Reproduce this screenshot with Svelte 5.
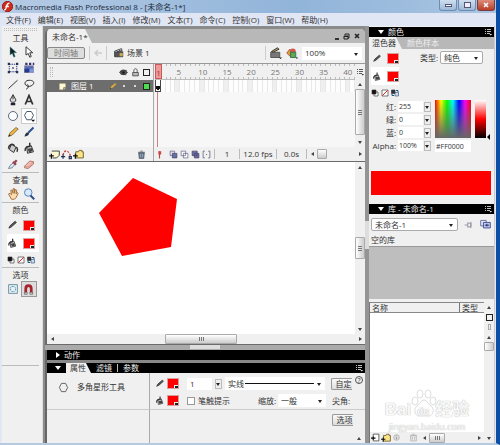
<script>
  const menus = ['文件(F)', '编辑(E)', '视图(V)', '插入(I)', '修改(M)', '文本(T)', '命令(C)', '控制(O)', '窗口(W)', '帮助(H)'];
  const tools = ['arrow', 'subarrow', 'transform', 'gradient', 'line', 'lasso', 'pen', 'text', 'oval', 'poly', 'pencil', 'brush', 'ink', 'bucket', 'dropper', 'eraser'];
  const frames = Array.from({ length: 41 }, (_, i) => i + 1);
  const channels = [['红:', '255'], ['绿:', '0'], ['蓝:', '0'], ['Alpha:', '100%']];
</script>

{#snippet icon(name, size = 14)}
  <svg class="ic" width={size} height={size} viewBox="0 0 16 16" fill="none" stroke="#333" stroke-width="1.3" aria-hidden="true">
    {#if name === 'arrow'}
      <path d="M4 1v11l3-2 2 5 2-1-2-5h4z" fill="#122" stroke="#5aa" stroke-width=".6" />
    {:else if name === 'subarrow'}
      <path d="M4 1v11l3-2 2 5 2-1-2-5h4z" fill="#fff" />
    {:else if name === 'transform'}
      <path d="M3 3h10v10H3z" stroke-dasharray="2 1" stroke="#347" /><path d="M1 1h3v3H1zM12 1h3v3h-3zM1 12h3v3H1zM12 12h3v3h-3zM7 7h2v2H7z" fill="#235" stroke="none" />
    {:else if name === 'gradient'}
      <path d="M2 5h12v9H2z" fill="#5869ba" stroke="#99a" /><path d="M2 9h6v5H2z" fill="#223b8c" stroke="none" /><path d="M3 1h3v3H3zM8 1h3v3H8zM13 1h2v3h-2z" fill="#336" stroke="none" /><path d="M9 9h5v5H9z" fill="#7f92dc" stroke="none" />
    {:else if name === 'line'}
      <path d="M2 14 14 3" />
    {:else if name === 'lasso'}
      <path d="M5 10C1 9 2 3 8 3s8 3 5 6-8 3-8 1 3-1 2 2-2 2-3 3" />
    {:else if name === 'pen'}
      <path d="M8 1 4 8l2 3h4l2-3zM8 1v6" fill="#ddd" /><path d="M5 12h6v3H5z" fill="#223" stroke="none" />
    {:else if name === 'text'}
      <path d="m3 14 5-12 5 12M5 10h6" stroke-width="2.3" />
    {:else if name === 'oval'}
      <circle cx="8" cy="8" r="6" fill="#fafcff" stroke="#567" />
    {:else if name === 'poly'}
      <path d="M5 2h6l3 5-3 6H5L2 7z" fill="#fff" stroke="#456" /><path d="M11 13h5l-2.500 3z" fill="#111" stroke="none" />
    {:else if name === 'pencil'}
      <path d="m2 14 2-5 8-7 3 2-8 8z" fill="#eeb53a" stroke="#875" /><path d="m2 14 1-3 2 2z" fill="#321" stroke="none" />
    {:else if name === 'brush'}
      <path d="m7 9 7-7" stroke="#2a4f8f" stroke-width="2.500" /><path d="M2 14c1-4 3-6 5-5s1 4-5 5z" fill="#234" stroke="none" />
    {:else if name === 'ink'}
      <path d="m6 3 6 4-3 7-6-4z" fill="#ccc" /><path d="M2 9c0-5 5-8 8-4M12 7c3 1 2 5 1 6" stroke-width="2" />
    {:else if name === 'bucket'}
      <path d="m5 6 6-1 3 8-8 2z" fill="#ddd" /><path d="M3 12c-1-5 3-6 6-6V1" stroke-width="2" /><path d="m6 9 6-1 1 4-5 2z" fill="#444" stroke="none" />
    {:else if name === 'dropper'}
      <path d="m2 14 2-4 5-4 2 2-4 5z" fill="#dbe7f5" stroke="#789" /><path d="m8 5 4 4M10 6l3-3" stroke="#954250" stroke-width="3" />
    {:else if name === 'eraser'}
      <path d="m2 11 7-7 5 1v3l-7 6-5-1z" fill="#f4b9b0" stroke="#b0736c" /><path d="m2 11 5 1 7-7" stroke="#c98" />
    {:else if name === 'hand'}
      <path d="m2 8 2-1 2 2-1-6 2 0 1 4V1h2v6l1-5 2 1-1 5 2-2 1 1-3 6-2 2H6z" fill="#fbdcae" stroke="#a5703b" />
    {:else if name === 'zoom'}
      <circle cx="7" cy="6" r="5" fill="#d7e9fb" stroke="#5782b4" /><path d="m10 10 5 5" stroke="#2c4e85" stroke-width="2.500" />
    {:else if name === 'stroke'}
      <path d="m3 13 2-4 8-7 2 2-8 7z" fill="#555" />
    {:else if name === 'blackwhite'}
      <path d="M6 6h8v8H6z" fill="#fff" /><path d="M2 2h8v8H2z" fill="#111" />
    {:else if name === 'none'}
      <path d="M2 2h12v12H2z" fill="#fff" /><path d="M3 13 13 3" stroke="#d22" stroke-width="2" />
    {:else if name === 'swap'}
      <path d="M1 2h7v7H1z" fill="#333" /><path d="M8 7h7v7H8z" fill="#cde" stroke="#357" /><path d="M10 3h4v3M6 13H2v-3" stroke="#258" stroke-width="2" />
    {:else if name === 'smooth'}
      <path d="M1 1h14v14H1z" fill="#e4f1f7" stroke="#567f95" /><path d="M6 4h4l2 2v4l-2 2H6l-2-2V6z" stroke="#57859b" stroke-dasharray="3 1" />
    {:else if name === 'magnet'}
      <path d="M4 14V7c0-6 8-6 8 0v7" stroke="#a7232b" stroke-width="4" /><path d="M2 12h4v3H2zM10 12h4v3h-4z" fill="#ccc" stroke="#555" stroke-width=".8" />
    {:else if name === 'scene'}
      <path d="M1 6h13v8H1z" fill="#555" stroke="#333" /><path d="m1 5 11-4 1 3-11 3z" fill="#ddd" /><path d="m4 4 2 2M8 3l2 2" /><path d="M9 8h5v5H9z" fill="#c9a94c" stroke="none" />
    {:else if name === 'clip'}
      <path d="M1 7h12v7H1z" fill="#777" stroke="#555" /><path d="m2 6 8-5 2 2-8 4z" fill="#b9a65e" /><path d="M12 14h4l-2 2z" fill="#111" stroke="none" />
    {:else if name === 'symbols'}
      <path d="m1 8 4-5 5 5-4 5z" fill="#e0a22d" stroke="#a55" /><circle cx="9" cy="6" r="4" fill="#cf594b" stroke="none" /><path d="M6 7h7v7H6z" fill="#67a54d" stroke="#375" /><path d="M13 14h3l-1.500 2z" fill="#111" stroke="none" />
    {:else if name === 'eye'}
      <path d="M1 8c3-6 10-6 14 0-4 5-10 5-14 0z" fill="#555" /><path d="m2 6 12-2M3 11l10 1" /><circle cx="8" cy="8" r="2" fill="#111" />
    {:else if name === 'lock'}
      <path d="M5 8V5c0-5 6-5 6 0v3" /><path d="M3 8h10v6H3z" fill="#bbb" />
    {:else if name === 'layer'}
      <path d="M2 2h12v8l-4 4H2z" fill="#fffad2" stroke="#776" /><path d="M14 10h-4v4" fill="#bba" stroke="#665" />
    {:else if name === 'addlayer'}
      <path d="M4 3h11v6l-4 4H5" fill="#fff8cf" /><path d="M0 10h7M3.500 7v7" stroke="#111" stroke-width="1.800" />
    {:else if name === 'guide'}
      <path d="M3 9c1-8 8-9 11 2" stroke="#c44" stroke-width="2" stroke-dasharray="3 2" /><path d="M0 11h6M3 8v6M12 11h3v3h-3z" stroke="#235" stroke-width="1.800" />
    {:else if name === 'folder'}
      <path d="M4 4h4l1-2h4v2h2v9H4z" fill="#fbe386" stroke="#665a2a" /><path d="M0 10h7M3.500 7v7" stroke="#111" stroke-width="1.800" />
    {:else if name === 'trash'}
      <path d="M3 5h10l-1 10H4zM2 4h12M6 2h4" fill="#68788a" stroke="#456" /><path d="M6 7v6M10 7v6" stroke="#abc" />
    {:else if name === 'onion'}
      <path d="M2 2h8v8H2z" fill="#dde" stroke="#668" /><path d="M6 6h8v8H6z" fill="#6870a5" stroke="#446" />
    {:else if name === 'outline'}
      <path d="M2 2h8v8H2zM6 6h8v8H6z" fill="#fff" stroke="#668" />
    {:else if name === 'multi'}
      <path d="M2 2h9v8H2zM6 6h8v8H6z" fill="#6d6da8" stroke="#446" />
    {:else if name === 'brackets'}
      <path d="M5 2H2v12h3M11 2h3v12h-3M7 8h2" stroke="#557" />
    {:else if name === 'playhead'}
      <path d="M8 2v13" stroke="#b44" stroke-width="2" /><path d="M6 2h5v6H6z" fill="#c44" stroke="none" />
    {:else if name === 'options'}
      <path d="M2 3h2M6 3h8M2 7h2M6 7h8M2 11h2M6 11h6" stroke="currentColor" stroke-width="1.600" /><path d="M11 12h5l-2.500 3z" fill="currentColor" stroke="none" />
    {:else if name === 'pin'}
      <path d="M1 8h5M6 4v8M6 5h5v6H6M11 3v10" stroke="#889" />
    {:else if name === 'newlib'}
      <path d="M1 2h8v8H1z" fill="#dde8fa" stroke="#669" /><path d="M5 5h10v8H5z" fill="#b8cdf0" stroke="#448" /><path d="M7 9h6M10 7v4" stroke="#225" />
    {:else if name === 'newsym'}
      <path d="M4 2h10v12H4z" fill="#fff" /><path d="M0 9h8M4 6v6" stroke="#111" stroke-width="2" />
    {:else if name === 'info'}
      <circle cx="8" cy="8" r="5" fill="#ddd" stroke="#aaa" /><path d="M8 7v4M8 4v1" stroke="#888" />
    {:else if name === 'bin'}
      <path d="M3 5h10v9H3zM2 4h12M6 2h4M6 7v5M10 7v5" stroke="#aaa" />
    {:else if name === 'flash'}
      <circle cx="8" cy="8" r="7.500" fill="#cf2c1c" stroke="#8d1712" /><path d="M11 3c-4 0-4 3-5 7-.5 2-1 3-3 3M5 8h5" stroke="#fff" stroke-width="2" />
    {:else if name === 'hex'}
      <path d="M5 2h6l3 6-3 6H5L2 8z" stroke="#555" />
    {/if}
  </svg>
{/snippet}

{#snippet swatch(label)}
  <button class="swatch" aria-label={label}><i></i></button>
{/snippet}

{#snippet vbar(label, cls)}
  <div class="vbar {cls}">
    <button class="nub up" aria-label="{label} 上"></button>
    <div class="track"><span class="thumb"></span></div>
    <button class="nub down" aria-label="{label} 下"></button>
  </div>
{/snippet}

{#snippet hbar(label, cls)}
  <div class="hbar {cls}">
    <button class="nub left" aria-label="{label} 左"></button>
    <div class="track"><span class="thumb"></span></div>
    <button class="nub next" aria-label="{label} 右"></button>
  </div>
{/snippet}

{#snippet colors(size)}
  <div class="colorrow">{@render icon('stroke', size)}{@render swatch('笔触颜色')}</div>
  <div class="colorrow active">{@render icon('bucket', size)}{@render swatch('填充颜色')}</div>
  <div class="minis">{@render icon('blackwhite', 8)}{@render icon('none', 8)}{@render icon('swap', 8)}</div>
{/snippet}

<div class="window">
  <header class="title">
    {@render icon('flash', 11)}
    <h1>Macromedia Flash Professional 8 - [未命名-1*]</h1>
    <div class="winbtns">
      <button aria-label="最小化"><i class="min"></i></button>
      <button aria-label="最大化"><i class="max"></i></button>
      <button aria-label="关闭" class="close">
        <svg width="6" height="6" viewBox="0 0 6 6" aria-hidden="true"><path d="m1 1 4 4M5 1 1 5" stroke="#fff" stroke-width="1.500" /></svg>
      </button>
    </div>
  </header>
  <nav class="menu">
    {#each menus as m}<button>{m}</button>{/each}
  </nav>

  <div class="body">
    <aside class="tools">
      <div class="grip"></div>
      <h2>工具</h2>
      <div class="toolgrid">
        {#each tools as t}
          <button class:on={t === 'poly'} aria-label={t}>{@render icon(t, 12)}</button>
        {/each}
      </div>
      <hr />
      <h2>查看</h2>
      <div class="toolgrid">
        <button aria-label="手形">{@render icon('hand', 12)}</button>
        <button aria-label="缩放">{@render icon('zoom', 12)}</button>
      </div>
      <hr />
      <h2>颜色</h2>
      {@render colors(10)}
      <hr />
      <h2>选项</h2>
      <div class="toolgrid optgrid">
        <button aria-label="对象绘制">{@render icon('smooth', 10)}</button>
        <button aria-label="贴紧" class="pressed">{@render icon('magnet', 11)}</button>
      </div>
      <hr />
    </aside>

    <main>
      <div class="doc">
        <div class="doctabs">
          <span class="doctab">未命名-1*</span>
          <div class="docbtns">
            <button aria-label="最小化"><i class="dmin"></i></button>
            <button aria-label="还原">
              <svg width="7" height="7" viewBox="0 0 7 7" fill="none" stroke="#222" aria-hidden="true"><path d="M2 2V1h4v4H5" /><path d="M1 3h4v3H1zM1 3.500h4" /></svg>
            </button>
            <button aria-label="关闭">
              <svg width="6" height="6" viewBox="0 0 6 6" aria-hidden="true"><path d="m1 1 4 4M5 1 1 5" stroke="#222" stroke-width="1.500" /></svg>
            </button>
          </div>
        </div>
        <div class="editbar">
          <button class="tlbtn">时间轴</button>
          <span class="sep"></span>
          <svg width="8" height="8" viewBox="0 0 8 8" aria-hidden="true"><path d="M4 1 1 4l3 3M1 4h7" fill="none" stroke="#ccc" stroke-width="1.500" /></svg>
          <span class="sep"></span>
          <span class="scene">{@render icon('scene', 10)}场景 1</span>
          <span class="grow"></span>
          <span class="sep"></span>
          {@render icon('clip', 12)}
          {@render icon('symbols', 12)}
          <span class="sel zoomsel"><select aria-label="缩放比例"><option>100%</option></select></span>
        </div>
        <section class="timeline">
          <div class="layers">
            <div class="layerhead">
              <span class="handle"></span>
              <span class="grow"></span>
              {@render icon('eye', 9)}{@render icon('lock', 9)}<i class="box"></i>
            </div>
            <div class="layer">
              {@render icon('layer', 9)}
              <span class="lname">图层 1</span>
              <span class="grow"></span>
              {@render icon('pencil', 8)}
              <i class="dot"></i><i class="dot"></i><i class="green"></i>
            </div>
            <div class="fill"></div>
            <div class="layerfoot">
              {@render icon('addlayer', 11)}{@render icon('guide', 11)}{@render icon('folder', 11)}
              <span class="grow"></span>
              {@render icon('trash', 9)}
            </div>
          </div>
          <div class="framepane">
            <div class="framecols">
              <div class="framearea">
                <div class="ruler">
                  {#each frames as f}
                    <span class="tick" class:cur={f === 1}>{f === 1 || f % 5 === 0 ? f : ''}</span>
                  {/each}
                </div>
                <div class="frames">
                  {#each frames as f}<span class="frame" class:key={f === 1} class:five={f % 5 === 0}></span>{/each}
                </div>
                <div class="fill"><span class="playline"></span></div>
              </div>
              <div class="tlside">
                {@render icon('options', 8)}
                {@render vbar('图层', 'tlv')}
              </div>
            </div>
            <div class="status">
              {@render icon('playhead', 9)}
              <span class="onions">
                {@render icon('onion', 9)}{@render icon('outline', 9)}{@render icon('multi', 9)}{@render icon('brackets', 9)}
              </span>
              <span class="stat n">1</span>
              <span class="stat fps">12.0 fps</span>
              <span class="stat sec">0.0s</span>
              {@render hbar('时间轴', 'tlh')}
            </div>
          </div>
        </section>
        <div class="stagewrap">
          <div class="stage">
            <svg width="80" height="80" viewBox="0 0 80 80" role="img" aria-label="五边形">
              <path d="M34 1 78 22 72 70 23 79 0 36z" fill="#f00" />
            </svg>
          </div>
          {@render vbar('舞台', 'stv')}
        </div>
        {@render hbar('舞台', 'sth')}
      </div>
      <div class="splitter"><span></span></div>
      <section class="props">
        <div class="blackbar"><i class="tri r"></i>动作</div>
        <div class="blackbar tabs">
          <i class="tri d"></i>
          <span class="ptab">属性</span><span>滤镜</span><i class="bar"></i><span>参数</span>
          <span class="grow"></span>
          {@render icon('options', 8)}
        </div>
        <div class="propbody">
          <div class="who">{@render icon('hex', 11)}<span>多角星形工具</span></div>
          <div class="fields">
            <div class="line">
              {@render icon('stroke', 9)}{@render swatch('笔触')}
              <input class="num" aria-label="笔触高度" value="1" />
              <button class="drop" aria-label="笔触高度选择"></button>
              <span class="sel strokesel"><select aria-label="笔触样式"><option>实线</option></select><i class="rule"></i></span>
              <button class="pbtn">自定</button>
            </div>
            <div class="line">
              {@render icon('bucket', 9)}{@render swatch('填充')}
              <label class="check"><input type="checkbox" />笔触提示</label>
              <label class="scale">缩放:<span class="sel"><select><option>一般</option></select></span></label>
              <span class="corner">尖角:</span>
            </div>
          </div>
          <div class="side">
            <button class="help" aria-label="帮助">?</button>
          </div>
          <div class="who blank"></div>
          <div class="fields more"><button class="pbtn">选项</button></div>
          <div class="side end"><button class="nub up" aria-label="展开"></button></div>
        </div>
      </section>
    </main>

    <div class="vsplit"><span></span></div>

    <aside class="right">
      <div class="blackbar"><i class="tri d"></i>颜色<span class="grow"></span>{@render icon('options', 8)}</div>
      <div class="rtabs"><span class="rtab">混色器</span><span class="off">颜色样本</span></div>
      <div class="mixer">
        <div class="mixtop">
          <div class="mixleft">{@render colors(9)}</div>
          <label class="type">类型:<span class="sel boxed"><select><option>纯色</option></select></span></label>
        </div>
        <div class="mixmain">
          <div class="chan">
            {#each channels as [name, value]}
              <label><span>{name}</span><input {value} /><button class="drop" aria-label="{name} 滑块"></button></label>
            {/each}
          </div>
          <div class="pick">
            <div class="picker"><span class="spectrum"></span><span class="lum"></span><i class="mark"></i></div>
            <input class="hexv" aria-label="颜色值" value="#FF0000" />
          </div>
        </div>
        <div class="preview"></div>
      </div>
      <div class="blackbar"><i class="tri d"></i>库 - 未命名-1<span class="grow"></span>{@render icon('options', 8)}</div>
      <div class="libtop">
        <span class="sel boxed"><select aria-label="库"><option>未命名-1</option></select></span>
        {@render icon('pin', 10)}{@render icon('newlib', 11)}
      </div>
      <div class="libname">空的库</div>
      <div class="libprev"></div>
      <div class="list">
        <div class="listmain">
          <div class="listhead"><span>名称</span><span class="kind">类型</span></div>
          <div class="items">
            <div class="brand">
              <svg class="paw" width="26" height="28" viewBox="0 0 26 28" aria-hidden="true">
                <g fill="#fff" stroke="#ddd"><ellipse cx="4" cy="12" rx="3" ry="4" /><ellipse cx="9" cy="5" rx="3" ry="4" /><ellipse cx="17" cy="5" rx="3" ry="4" /><ellipse cx="22" cy="12" rx="3" ry="4" /><path d="M13 11c-3 0-4 4-7 6-4 3-2 10 2 10h10c4 0 6-7 2-10-3-2-4-6-7-6z" /></g>
              </svg>
              <b>Bai<em>du</em>经验</b>
              <small>jingyan.baidu.com</small>
            </div>
          </div>
          <div class="listfoot">
            {@render icon('newsym', 9)}{@render icon('folder', 10)}{@render icon('info', 9)}
            <span class="grow"></span>
            {@render icon('bin', 9)}
            {@render hbar('库', 'lbh')}
          </div>
        </div>
        <div class="listside">
          <button class="nub up" aria-label="排序"></button>
          <button class="wide" aria-label="宽库视图"><i class="box"></i></button>
          <button class="wide" aria-label="窄库视图"><i class="thin"></i></button>
          {@render vbar('库', 'lbv')}
        </div>
      </div>
    </aside>
  </div>
</div>

<style>
  .window, .window * { box-sizing: border-box; }
  .window {
    display: flex; flex-direction: column; width: 100%; height: 100vh; min-height: 440px; overflow: hidden;
    border-right: 4px solid #0b50a6; border-bottom: 2px solid #b5cae0; background: #dfe8f3;
    font: 8px/10px "Open Sans", "Noto Sans CJK SC", sans-serif; color: #333;
  }
  button, input, select { margin: 0; padding: 0; border: 0; background: none; font: inherit; color: inherit; min-width: 0; }
  button { display: flex; align-items: center; justify-content: center; white-space: nowrap; }
  h1, h2 { margin: 0; font: inherit; }
  i, em { font-style: normal; }
  .ic { flex: none; display: block; }
  .grow { flex: 1; }
  .fill { flex: 1; background: #f7f7f7; }

  .title { display: flex; height: 13px; flex: none; align-items: center; gap: 2px; padding-left: 2px; background: linear-gradient(90deg, #b5cbe5, #91b4d9 60%, #a9c5e2); }
  h1 { flex: 1; line-height: 13px; color: #1c2a3c; white-space: nowrap; }
  .winbtns { display: flex; align-self: flex-start; gap: 1px; padding-right: 1px; }
  .winbtns button { width: 18px; height: 11px; border: 1px solid #6f8cae; border-top: 0; border-radius: 0 0 3px 3px; background: linear-gradient(#cfdeee, #9db9d8); }
  .winbtns .close { background: linear-gradient(#dc8c7c, #b93d27); border-color: #7c3c3a; }
  .min { width: 7px; height: 3px; border: 1px solid #557; background: #fff; }
  .max { width: 7px; height: 6px; border: 1px solid #557; background: #eef; }
  .menu { display: flex; flex: none; height: 13px; gap: 7px; padding: 0 6px; align-items: center; background: #e1e6f5; }

  .body { display: flex; flex: 1; min-height: 0; margin: 0 1px 0 2px; background: #8b8b8b; }

  .tools { width: 41px; flex: none; padding: 2px 3px 0 0; border-right: 1px solid #ddd; background: #f0f0f0; }
  .grip { height: 3px; margin: 0 2px; border-top: 1px dotted #bbb; border-bottom: 1px dotted #bbb; }
  h2 { text-align: center; line-height: 13px; }
  hr { height: 1px; margin: 0; border: 0; background: #bbb; }
  .toolgrid { display: grid; grid-template-columns: 16px 16px; grid-auto-rows: 16px; justify-content: center; }
  .optgrid { margin-bottom: 68px; }
  .toolgrid .on { border: 1px solid #ccc; background: #fff; }
  .pressed { border: 1px solid #999; background: #ddd; }
  .colorrow { display: flex; height: 18px; align-items: center; justify-content: center; gap: 6px; }
  .colorrow.active { background: #fff; }
  .tools .active { margin-left: 5px; padding-right: 5px; }
  .swatch { width: 12px; height: 11px; flex: none; background: #f00; border: 1px solid #d9a0a0; align-items: flex-end; justify-content: flex-end; }
  .swatch i { width: 4px; height: 3px; background: #222; border: solid #eee; border-width: 1px 0 0 1px; }
  .minis { display: flex; height: 15px; align-items: center; justify-content: center; gap: 2px; }

  main { display: flex; flex-direction: column; flex: 1; min-width: 0; margin-left: 2px; padding-top: 3px; }
  .doc { display: flex; flex-direction: column; flex: 1; min-height: 0; border: solid #6b6b6b; border-width: 0 0 1px 2px; border-radius: 5px 5px 0 0; overflow: hidden; background: #f0f0f0; }
  .doctabs { display: flex; flex: none; height: 14px; justify-content: space-between; background: #b8b8b8; }
  .doctab { width: 45px; padding: 3px 0 0 5px; background: #f0f0f0; white-space: nowrap; clip-path: polygon(0 0, 38px 0, 100% 100%, 0 100%); }
  .docbtns { display: flex; align-items: center; gap: 4px; padding-right: 5px; }
  .dmin { width: 4px; height: 2px; margin-top: 5px; background: #333; }
  .editbar { display: flex; flex: none; height: 20px; align-items: center; gap: 4px; padding-right: 3px; }
  .tlbtn { width: 38px; height: 12px; border: 1px solid #888; border-radius: 2px; background: #ddd; color: #777; }
  .sep { width: 1px; height: 14px; background: #ccc; }
  .scene { display: flex; align-items: center; gap: 3px; margin-left: 3px; }

  .sel { position: relative; display: flex; min-width: 0; background: #fff; }
  .sel select { width: 100%; height: 13px; padding: 0 9px 0 3px; appearance: none; outline: 0; }
  .sel::after, .drop::after { content: ""; position: absolute; right: 4px; top: 6px; border: 2px solid transparent; border-top: 3px solid #222; border-bottom: 0; pointer-events: none; }
  .boxed { border: 1px solid #aaa; border-radius: 2px; }
  .boxed select { height: 11px; }
  .boxed::after { top: 5px; }
  .zoomsel { width: 60px; }
  .drop { position: relative; width: 7px; height: 10px; flex: none; border: 1px solid #bbb; background: #eee; }
  .drop::after { right: 1px; top: 3px; }

  .timeline { display: flex; flex: none; height: 99px; border-top: 1px solid #999; border-bottom: 1px solid #6b6b6b; }
  .layers { display: flex; flex-direction: column; width: 107px; flex: none; border-right: 1px solid #aaa; }
  .layerhead { display: flex; flex: none; height: 16px; align-items: center; gap: 3px; padding: 0 3px; }
  .handle { width: 3px; height: 10px; border: 1px dotted #bbb; }
  .box { width: 7px; height: 7px; border: 1px solid #222; }
  .layer { display: flex; flex: none; height: 12px; align-items: center; gap: 4px; padding: 0 3px 0 11px; background: #6d6d6d; color: #fff; }
  .lname { white-space: nowrap; }
  .dot { width: 2px; height: 2px; margin: 0 3px 0 2px; border-radius: 50%; background: #fff; }
  .green { width: 7px; height: 7px; border: 1px solid #222; background: #4be04b; }
  .layerfoot { display: flex; flex: none; height: 14px; align-items: center; gap: 1px; padding: 0 7px 0 2px; }
  .framepane { display: flex; flex-direction: column; flex: 1; min-width: 0; }
  .framecols { display: flex; flex: 1; min-height: 0; }
  .framearea { display: flex; flex-direction: column; flex: 1; min-width: 0; padding-left: 1px; overflow: hidden; }
  .ruler { display: flex; flex: none; height: 16px; border-bottom: 1px solid #bbb; }
  .tick { display: flex; flex: 1; min-width: 0; justify-content: center; line-height: 15px; white-space: nowrap; color: #777; background: linear-gradient(#bbb, #bbb) right top / 1px 2px no-repeat, linear-gradient(#bbb, #bbb) right bottom / 1px 2px no-repeat; }
  .tick.cur { border: 1px solid #c55; background: #ee9a9a; color: #a33; }
  .frames { display: flex; flex: none; height: 12px; }
  .frame { display: flex; flex: 1; border-right: 1px solid #e8e8e8; background: #fdfdfd; }
  .frame.five { background: #efefef; }
  .frame.key { border: 1px solid #444; border-top: 0; background: radial-gradient(circle at 50% 70%, #111 2px, #fff 2px); }
  .playline { display: block; width: 1px; height: 100%; margin-left: 2px; background: #d08080; }
  .status { display: flex; flex: none; height: 14px; align-items: center; padding-left: 1px; }
  .onions { display: flex; gap: 2px; padding: 0 3px 0 5px; }
  .stat { border-left: 1px solid #bbb; text-align: center; white-space: nowrap; }
  .n { width: 25px; }
  .fps { width: 37px; }
  .sec { width: 31px; border-right: 1px solid #bbb; }
  .tlside { display: flex; flex-direction: column; width: 10px; flex: none; align-items: center; gap: 3px; padding-top: 4px; }

  .vbar, .hbar { display: flex; flex: none; background: #f0f0f0; }
  .vbar { flex-direction: column; width: 10px; }
  .hbar { height: 10px; }
  .track { display: flex; flex: 1; min-width: 0; min-height: 0; }
  .vbar .track { flex-direction: column; }
  .thumb { flex: none; border: 1px solid #aaa; border-radius: 1px; background: linear-gradient(90deg, #fff, #ccc); }
  .hbar .thumb { background: linear-gradient(#fff, #ccc); }
  .nub { flex: none; width: 10px; height: 10px; }
  .nub::after { content: ""; border: 2px solid transparent; }
  .up::after { border-bottom: 3px solid #444; border-top: 0; }
  .down::after { border-top: 3px solid #444; border-bottom: 0; }
  .left::after { border-right: 3px solid #444; border-left: 0; }
  .next::after { border-left: 3px solid #444; border-right: 0; }
  .tlv { flex: 1; }
  .tlv .thumb { height: 96%; }
  .tlh { flex: 1; }
  .tlh .thumb { width: 10px; }
  .stv .thumb { height: 22px; margin-top: 65px; }
  .sth .thumb { width: 72px; margin-left: 108px; }
  .stv .thumb, .sth .thumb, .lbh .thumb, .tlv .thumb { display: flex; align-items: center; justify-content: center; }
  .stv .thumb::after, .tlv .thumb::after { content: ""; width: 4px; height: 5px; background: repeating-linear-gradient(#777 0 1px, transparent 1px 2px); }
  .sth .thumb::after, .lbh .thumb::after { content: ""; width: 5px; height: 4px; background: repeating-linear-gradient(90deg, #777 0 1px, transparent 1px 2px); }

  .stagewrap { display: flex; flex: 1; min-height: 0; }
  .stage { flex: 1; padding: 15px 0 0 52px; background: #fff; }
  .splitter { display: flex; flex: none; height: 5px; justify-content: center; background: #aaa; }
  .splitter span { width: 30px; height: 4px; background: #ddd; }

  .blackbar { display: flex; flex: none; height: 10px; align-items: center; gap: 4px; padding: 0 2px 0 9px; background: #000; color: #eee; }
  .tri { width: 0; height: 0; border: 3px solid transparent; }
  .tri.d { border-top: 4px solid #fff; border-bottom: 0; }
  .tri.r { border-left: 4px solid #fff; border-right: 0; }
  .props { flex: none; border-left: 2px solid #666; background: #f0f0f0; }
  .tabs { height: 13px; border-top: 3px solid #888; gap: 5px; padding-left: 8px; }
  .ptab { width: 25px; padding-left: 4px; background: #f0f0f0; color: #333; clip-path: polygon(0 0, 20px 0, 100% 100%, 0 100%); }
  .bar { width: 1px; height: 8px; background: #bbb; }
  .propbody { display: grid; grid-template-columns: 103px minmax(0, 1fr) 12px; grid-template-rows: 37px 33px; }
  .who { display: flex; align-items: center; gap: 8px; padding: 0 0 8px 11px; border-right: 1px solid #aaa; border-bottom: 1px solid #ccc; }
  .blank { border-bottom: 0; }
  .fields { overflow: hidden; padding: 0 0 0 5px; border-bottom: 1px solid #ccc; }
  .line { display: flex; height: 17px; align-items: center; gap: 3px; white-space: nowrap; }
  .num { width: 25px; height: 12px; flex: none; margin-left: 5px; padding-left: 3px; background: #fff; }
  .strokesel { width: 100px; flex: none; }
  .rule { position: absolute; left: 20px; right: 11px; top: 6px; height: 1px; background: #111; }
  .pbtn { width: 21px; height: 12px; flex: none; margin-left: 3px; padding-left: 3px; border: 1px solid #999; border-right: 0; border-radius: 2px 0 0 2px; background: linear-gradient(#fafafa, #ddd); }
  .check { display: flex; align-items: center; gap: 3px; margin-left: 5px; }
  .check input { width: 8px; height: 8px; appearance: none; border: 1px solid #999; background: #fff; }
  .scale { display: flex; align-items: center; gap: 2px; margin-left: 25px; }
  .scale .sel { width: 48px; }
  .corner { margin-left: 3px; }
  .fields .line:first-child { margin-top: 2px; }
  .more { display: flex; justify-content: flex-end; padding: 4px 0 0; border: 0; }
  .side { display: flex; justify-content: center; padding-top: 3px; border-bottom: 1px solid #ccc; }
  .help { width: 8px; height: 8px; border: 1px solid #555; border-radius: 50%; font-size: 7px; line-height: 7px; }
  .end { align-items: flex-end; border: 0; }

  .vsplit { display: flex; width: 4px; flex: none; align-items: center; background: #949494; }
  .vsplit span { width: 4px; height: 28px; background: #ddd; }

  .right { display: flex; flex-direction: column; width: 126px; flex: none; padding-top: 1px; border-right: 1px solid #ccc; background: #f0f0f0; }
  .rtabs { display: flex; flex: none; height: 12px; gap: 5px; line-height: 12px; background: #b8b8b8; color: #eee; }
  .rtab { width: 33px; padding-left: 3px; background: #f0f0f0; color: #333; clip-path: polygon(0 0, 27px 0, 100% 100%, 0 100%); }
  .mixer { flex: none; height: 155px; padding: 0 2px; }
  .mixtop { display: flex; justify-content: space-between; padding-right: 9px; }
  .mixleft { width: 28px; }
  .type { display: flex; align-items: center; align-self: flex-start; gap: 2px; padding-top: 2px; }
  .type .sel { width: 43px; }
  .mixmain { display: flex; gap: 4px; }
  .chan label { display: flex; height: 13px; align-items: center; }
  .chan span { width: 25px; text-align: right; }
  .chan input { width: 25px; height: 11px; margin: 0 1px 0 2px; padding-left: 1px; background: #fff; font-size: 7px; }
  .picker { position: relative; display: flex; gap: 4px; height: 38px; }
  .spectrum { width: 36px; background: linear-gradient(transparent, #666), linear-gradient(90deg, #f00, #ff0, #0f0, #0ff, #00f, #f0f, #f00); }
  .lum { width: 11px; background: linear-gradient(#fff, #f00 50%, #000); }
  .mark { position: absolute; right: -4px; bottom: -2px; border: 3px solid transparent; border-right: 3px solid #000; border-left: 0; }
  .hexv { width: 36px; height: 12px; margin-top: 2px; padding-left: 1px; background: #fff; font-size: 7px; }
  .preview { height: 24px; margin: 19px 1px 0 0; background: #f00; }
  .libtop { display: flex; flex: none; height: 21px; align-items: center; gap: 6px; padding: 0 3px 0 2px; }
  .libtop .sel { flex: 1; }
  .libname { flex: none; height: 12px; padding-left: 2px; border-bottom: 1px solid #999; }
  .libprev { flex: none; height: 52px; background: #bebebe; }
  .list { display: flex; flex: 1; min-height: 0; margin-top: 3px; border-left: 1px solid #777; }
  .listmain { display: flex; flex-direction: column; flex: 1; min-width: 0; }
  .listhead { display: flex; flex: none; height: 11px; padding-left: 2px; justify-content: space-between; border: solid #888; border-width: 1px 0; line-height: 9px; }
  .kind { width: 25px; padding-left: 2px; border-left: 1px solid #777; }
  .items { display: flex; flex: 1; align-items: flex-end; justify-content: center; background: #fff; }
  .brand { position: relative; display: flex; flex-direction: column; color: #f8f8f8; text-shadow: 0 0 1px #bbb, 0 0 1px #ccc; }
  .brand b { z-index: 1; font-family: "Liberation Sans", "Noto Sans CJK SC", sans-serif; font-size: 17px; line-height: 20px; white-space: nowrap; }
  .brand em { padding: 0 6px; font-size: 10px; }
  .brand small { font-size: 9px; line-height: 10px; text-align: center; }
  .paw { position: absolute; left: 26px; top: -11px; }
  .listfoot { display: flex; flex: none; height: 11px; align-items: center; gap: 1px; padding-left: 1px; }
  .lbh { width: 65px; }
  .lbh .thumb { width: 16px; }
  .listside { display: flex; flex-direction: column; width: 10px; flex: none; }
  .wide { height: 10px; flex: none; }
  .thin { width: 3px; height: 6px; border: 1px solid #aaa; }
  .lbv { flex: 1; }
  .lbv .thumb { height: 9px; }
</style>
